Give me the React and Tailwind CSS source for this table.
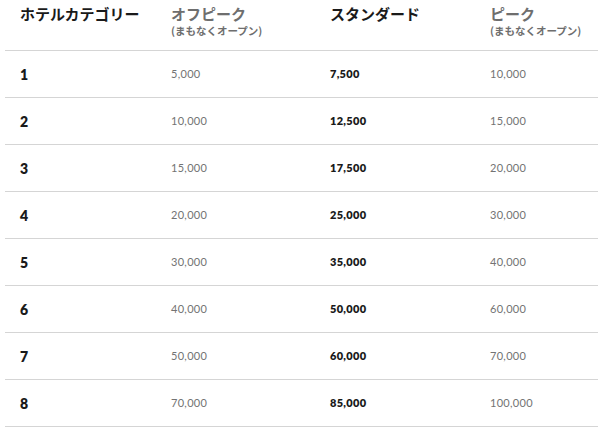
import React from "react";

const rows = [
  ["1", "5,000", "7,500", "10,000"],
  ["2", "10,000", "12,500", "15,000"],
  ["3", "15,000", "17,500", "20,000"],
  ["4", "20,000", "25,000", "30,000"],
  ["5", "30,000", "35,000", "40,000"],
  ["6", "40,000", "50,000", "60,000"],
  ["7", "50,000", "60,000", "70,000"],
  ["8", "70,000", "85,000", "100,000"],
];

const jp = { fontFamily: '"Noto Sans CJK JP", sans-serif' };
const num = { fontFamily: 'Lato, "Noto Sans CJK JP", sans-serif' };

export default function App() {
  return (
    <div className="w-[598px] h-[432px] bg-white overflow-hidden">
      <div className="ml-[5px]">
        <div className="grid grid-cols-[151px_159px_160px_1fr] h-[51px] border-b border-[#d5d5d5] pl-[15px] pt-[3px]" style={jp}>
          <div className="text-[15px] font-bold text-[#1a1a1a] leading-[22px]">ホテルカテゴリー</div>
          <div className="text-[#6e6e6e] font-bold">
            <div className="text-[15px] leading-[22px]">オフピーク</div>
            <div className="text-[10.5px] leading-[12px]">(まもなくオープン)</div>
          </div>
          <div className="text-[15px] font-bold text-[#1a1a1a] leading-[22px]">スタンダード</div>
          <div className="text-[#6e6e6e] font-bold">
            <div className="text-[15px] leading-[22px]">ピーク</div>
            <div className="text-[10.5px] leading-[12px]">(まもなくオープン)</div>
          </div>
        </div>
        {rows.map((r) => (
          <div
            key={r[0]}
            className="grid grid-cols-[151px_159px_160px_1fr] items-center h-[47px] border-b border-[#d5d5d5] pl-[15px]"
            style={num}
          >
            <div className="text-[14px] font-extrabold text-[#1a1a1a]">{r[0]}</div>
            <div className="text-[11px] text-[#737373] tracking-[0.3px]">{r[1]}</div>
            <div className="text-[11px] font-extrabold text-[#1a1a1a] tracking-[0.3px]">{r[2]}</div>
            <div className="text-[11px] text-[#737373] tracking-[0.3px]">{r[3]}</div>
          </div>
        ))}
      </div>
    </div>
  );
}
